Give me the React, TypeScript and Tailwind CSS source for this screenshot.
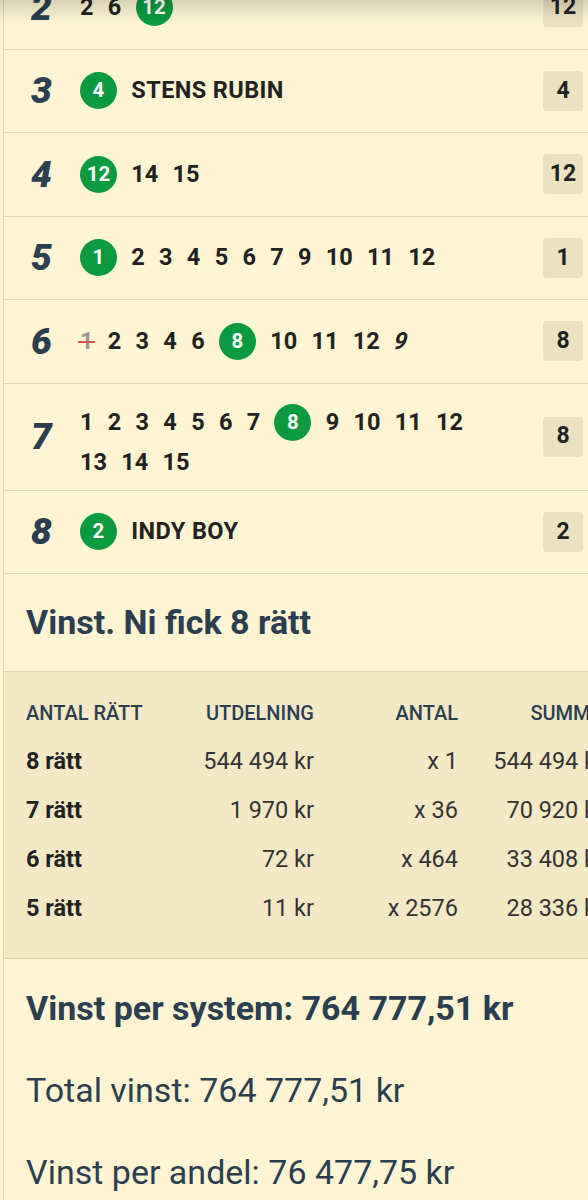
import React from "react";

type Item = { t: string; win?: boolean; name?: boolean; struck?: boolean; italic?: boolean };
type Row = { n: string; items: Item[]; box: string; multi?: boolean };

const nums = (a: number[]): Item[] => a.map((x) => ({ t: String(x) }));

const rows: Row[] = [
  { n: "2", items: [...nums([2, 6]), { t: "12", win: true }], box: "12" },
  { n: "3", items: [{ t: "4", win: true }, { t: "STENS RUBIN", name: true }], box: "4" },
  { n: "4", items: [{ t: "12", win: true }, ...nums([14, 15])], box: "12" },
  { n: "5", items: [{ t: "1", win: true }, ...nums([2, 3, 4, 5, 6, 7, 9, 10, 11, 12])], box: "1" },
  {
    n: "6",
    items: [
      { t: "1", struck: true },
      ...nums([2, 3, 4, 6]),
      { t: "8", win: true },
      ...nums([10, 11, 12]),
      { t: "9", italic: true },
    ],
    box: "8",
  },
  {
    n: "7",
    items: [...nums([1, 2, 3, 4, 5, 6, 7]), { t: "8", win: true }, ...nums([9, 10, 11, 12, 13, 14, 15])],
    box: "8",
    multi: true,
  },
  { n: "8", items: [{ t: "2", win: true }, { t: "INDY BOY", name: true }], box: "2" },
];

function Chip({ it }: { it: Item }) {
  if (it.win) {
    return (
      <span className="flex h-[37px] w-[37px] items-center justify-center rounded-full bg-[#0b9a40] text-[20.5px] font-bold text-white">
        {it.t}
      </span>
    );
  }
  if (it.struck) {
    return (
      <span className="relative flex h-[37px] items-center text-[23.5px] font-bold text-[#9a9a8f]">
        {it.t}
        <span className="absolute left-[-2px] right-[-2px] top-[18px] h-[2px] bg-[#d9534f]" />
      </span>
    );
  }
  if (it.name) {
    return (
      <span className="flex h-[37px] items-center text-[23.5px] font-bold tracking-[0.4px] text-[#222]">{it.t}</span>
    );
  }
  return (
    <span
      className={`flex h-[37px] items-center text-[23.5px] font-bold text-[#222] ${it.italic ? "italic [transform:skewX(-10deg)]" : ""}`}
    >
      {it.t}
    </span>
  );
}

function HorseRow({ r }: { r: Row }) {
  return (
    <div
      className={`flex items-center border-b border-[#e4d8b1] pl-[26px] pr-[5px] ${r.multi ? "h-[107px]" : "h-[83.5px]"}`}
    >
      <div className="w-[50px] pl-[1px] text-[37px] font-black italic leading-none text-[#2c3e50]">{r.n}</div>
      <div
        className={`flex flex-1 flex-wrap items-center gap-x-[14.3px] gap-y-[3px] pr-[60px] ${r.multi ? "pt-[12px]" : ""}`}
      >
        {r.items.map((it, i) => (
          <Chip key={i} it={it} />
        ))}
      </div>
      <div className="flex h-[40px] w-[40px] items-center justify-center rounded-[4px] bg-[#ebe2c1] text-[23px] font-bold text-[#222]">
        {r.box}
      </div>
    </div>
  );
}

const table = [
  ["8 rätt", "544 494 kr", "x 1", "544 494 kr"],
  ["7 rätt", "1 970 kr", "x 36", "70 920 kr"],
  ["6 rätt", "72 kr", "x 464", "33 408 kr"],
  ["5 rätt", "11 kr", "x 2576", "28 336 kr"],
];

export default function App() {
  return (
    <div className="relative h-[1200px] w-[588px] overflow-hidden bg-[#fdf5d3] [font-family:Roboto,'Liberation_Sans',sans-serif]">
      <div className="ml-[3px] mt-[-34px] border-l border-[#e2d6ae]">
        {rows.map((r) => (
          <HorseRow key={r.n} r={r} />
        ))}

        <div className="flex h-[98px] items-center border-b border-[#e2d6ae] pl-[22px]">
          <h2 className="text-[34px] font-bold text-[#2c3e50]">Vinst. Ni fick 8 rätt</h2>
        </div>

        <div className="border-b border-[#e2d6ae] bg-[#f3e9c7] pb-[25px] pl-[22px] pt-[16px]">
          <div className="grid w-[600px] grid-cols-[144px_144px_144px_146px]">
            <div className="flex h-[49px] items-center text-[20px] font-medium text-[#2c3e50]">ANTAL RÄTT</div>
            <div className="flex h-[49px] items-center justify-end text-[20px] font-medium text-[#2c3e50]">UTDELNING</div>
            <div className="flex h-[49px] items-center justify-end text-[20px] font-medium text-[#2c3e50]">ANTAL</div>
            <div className="flex h-[49px] items-center justify-end whitespace-nowrap text-[20px] font-medium text-[#2c3e50]">
              SUMMA
            </div>
            {table.map((row) => (
              <React.Fragment key={row[0]}>
                <div className="flex h-[49px] items-center text-[23.5px] font-bold text-[#222]">{row[0]}</div>
                <div className="flex h-[49px] items-center justify-end whitespace-nowrap text-[23.5px] text-[#333]">
                  {row[1]}
                </div>
                <div className="flex h-[49px] items-center justify-end whitespace-nowrap text-[23.5px] text-[#333]">
                  {row[2]}
                </div>
                <div className="flex h-[49px] items-center justify-end whitespace-nowrap text-[23.5px] text-[#333]">
                  {row[3]}
                </div>
              </React.Fragment>
            ))}
          </div>
        </div>

        <div className="pl-[22px] pt-[8px] text-[#2c3e50]">
          <div className="flex h-[82px] items-center text-[34px] font-bold">Vinst per system: 764 777,51 kr</div>
          <div className="flex h-[82px] items-center text-[34px]">Total vinst: 764 777,51 kr</div>
          <div className="flex h-[82px] items-center text-[34px]">Vinst per andel: 76 477,75 kr</div>
        </div>
      </div>
      <div className="pointer-events-none absolute left-0 right-0 top-0 h-[22px] bg-gradient-to-b from-black/15 to-transparent" />
    </div>
  );
}
